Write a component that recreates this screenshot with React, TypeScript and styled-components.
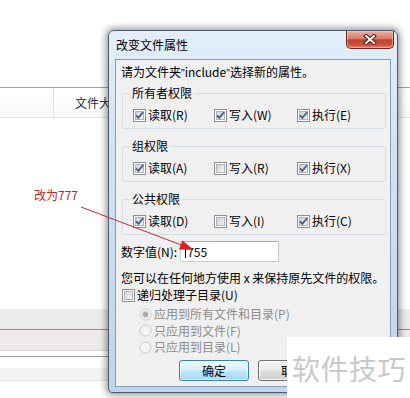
import React from 'react';
import styled, { createGlobalStyle } from 'styled-components';

const GlobalStyle = createGlobalStyle`
  html, body {
    margin: 0;
    padding: 0;
    background: #fff;
  }
`;

const Page = styled.div`
  position: relative;
  width: 410px;
  height: 398px;
  overflow: hidden;
  background: #fff;
  font-family: "Noto Sans CJK SC", "Liberation Sans", sans-serif;
  font-size: 12px;
  line-height: 14px;
  color: #000;
`;

/* explorer list behind the dialog */
const Explorer = styled.div`
  display: flex;
  flex-direction: column;
  padding-top: 87px;
`;

const ListHeader = styled.div`
  display: flex;
  height: 29px;
  border-top: 1px solid #a0a0a0;
  border-bottom: 1px solid #e3e3e3;
  background: linear-gradient(#ffffff, #f9f9f9);
`;

const HeaderCell = styled.div<{ $w?: number }>`
  width: ${(p) => (p.$w ? `${p.$w}px` : 'auto')};
  flex: ${(p) => (p.$w ? 'none' : '1')};
  border-right: ${(p) => (p.$w ? '1px solid #e2e2e2' : 'none')};
  display: flex;
  align-items: center;
  padding-left: ${(p) => (p.$w ? 0 : 21)}px;
  color: #333;
`;

const Band = styled.div<{ $h: number; $bg: string; $line: string }>`
  height: ${(p) => p.$h}px;
  background: ${(p) => p.$bg};
  border-bottom: 1px solid ${(p) => p.$line};
`;

/* dialog window */
const Window = styled.div`
  position: absolute;
  left: 108px;
  top: 30px;
  width: 290px;
  height: 363px;
  box-sizing: border-box;
  border: 1px solid #4c5a6c;
  border-radius: 6px 6px 4px 4px;
  background: linear-gradient(180deg, #e3eefa 0%, #d2e3f5 30%, #bfd5ed 100%);
  box-shadow: 0 0 7px 2px rgba(0, 0, 0, 0.42);
  display: flex;
  flex-direction: column;
  padding: 0 6px 5px 6px;
`;

const TitleBar = styled.div`
  height: 28px;
  margin: 0 -6px;
  padding: 0 3px 0 7px;
  display: flex;
  justify-content: space-between;
  align-items: flex-start;
`;

const TitleText = styled.div`
  padding-top: 7px;
  color: #000;
`;

const CloseButton = styled.div`
  width: 48px;
  height: 18px;
  box-sizing: border-box;
  border: 1px solid #6a2720;
  border-top: none;
  border-radius: 0 0 5px 5px;
  background: linear-gradient(
    180deg,
    #eab1a6 0%,
    #da7a68 45%,
    #c5402e 52%,
    #c9503e 80%,
    #dd7d6b 100%
  );
  box-shadow: inset 0 0 0 1px rgba(255, 210, 200, 0.5);
  display: flex;
  align-items: center;
  justify-content: center;
`;

const Client = styled.div`
  flex: 1;
  background: #f0f0f0;
  border: 1px solid #8a9cb3;
  padding: 5px 4px 0 5px;
  display: flex;
  flex-direction: column;
`;

const Line = styled.div<{ $mt?: number }>`
  margin-top: ${(p) => p.$mt ?? 0}px;
  white-space: nowrap;
`;

const Quote = styled.span`
  font-family: "Liberation Sans", sans-serif;
  font-size: 11px;
`;

const Group = styled.fieldset<{ $mt: number }>`
  margin: ${(p) => p.$mt}px 0 0 1px;
  padding: 7px 9px 5px 10px;
  border: 1px solid #d5dfe5;
  border-radius: 3px;
  min-width: 0;
`;

const Legend = styled.legend`
  padding: 0 2px;
  margin-left: -3px;
  line-height: 14px;
`;

const CheckGrid = styled.div`
  display: grid;
  grid-template-columns: 81px 83px 1fr;
  height: 16px;
  align-items: center;
`;

const Option = styled.label<{ $indent?: number; $disabled?: boolean }>`
  display: flex;
  align-items: center;
  gap: 2px;
  height: 16px;
  padding-left: ${(p) => p.$indent ?? 0}px;
  color: ${(p) => (p.$disabled ? '#8c8c8c' : '#000')};
  white-space: nowrap;
`;

const Recursive = styled(Option)`
  margin: 2px 0 0 1px;
`;

const ValueRow = styled.div`
  margin-top: 6px;
  display: flex;
  align-items: center;
  gap: 3px;
`;

const TextBox = styled.div`
  width: 99px;
  height: 21px;
  box-sizing: border-box;
  border: 1px solid #c8ccd4;
  border-top-color: #abadb3;
  background: #fff;
  display: flex;
  align-items: center;
  padding-left: 4px;
  gap: 1px;
`;

const Caret = styled.span`
  width: 1px;
  height: 13px;
  background: #000;
`;

const RadioList = styled.div`
  margin-top: 3px;
  display: flex;
  flex-direction: column;
  gap: 0.5px;
`;

const ButtonRow = styled.div`
  margin-top: 5px;
  display: flex;
  justify-content: center;
  gap: 9px;
`;

const Button = styled.div<{ $primary?: boolean }>`
  width: 70px;
  height: 21px;
  box-sizing: border-box;
  border-radius: 3px;
  border: 1px solid ${(p) => (p.$primary ? '#3c7fb1' : '#707070')};
  background: ${(p) =>
    p.$primary
      ? 'linear-gradient(180deg, #eaf6fd 0%, #d9f0fc 48%, #bee6fd 52%, #a7d9f5 100%)'
      : 'linear-gradient(180deg, #f2f2f2 0%, #ebebeb 48%, #dddddd 52%, #cfcfcf 100%)'};
  box-shadow: inset 0 0 0 1px ${(p) => (p.$primary ? 'rgba(255,255,255,0.6)' : 'rgba(255,255,255,0.8)')};
  display: flex;
  align-items: center;
  justify-content: center;
`;

/* overlays */
const Annotation = styled.div`
  position: absolute;
  left: 34px;
  top: 188px;
  color: #b8272a;
  font-size: 12px;
  line-height: 14px;
`;

const ArrowLayer = styled.svg`
  position: absolute;
  left: 0;
  top: 0;
  pointer-events: none;
`;

const Watermark = styled.div`
  position: absolute;
  left: 287px;
  top: 337px;
  width: 123px;
  height: 61px;
  background: #fff;
  color: #c9c9c9;
  font-size: 28px;
  line-height: 30px;
  display: flex;
  align-items: center;
  padding-left: 5px;
  box-sizing: border-box;
  letter-spacing: 0.5px;
`;

const CheckBox = ({ checked }: { checked?: boolean }) => (
  <svg width="13" height="13" viewBox="0 0 13 13">
    <defs>
      <linearGradient id="cbfill" x1="0" y1="0" x2="1" y2="1">
        <stop offset="0" stopColor="#cbcfd5" />
        <stop offset="1" stopColor="#f7f7f7" />
      </linearGradient>
    </defs>
    <rect x="0.5" y="0.5" width="12" height="12" fill="#fff" stroke="#8e8f8f" />
    <rect x="2.5" y="2.5" width="8" height="8" fill="url(#cbfill)" stroke="#b0b4ba" />
    {checked && (
      <path d="M3 6.3 L5.4 8.9 L10.2 3" fill="none" stroke="#4b5f8f" strokeWidth="1.9" />
    )}
  </svg>
);

const Radio = ({ checked }: { checked?: boolean }) => (
  <svg width="13" height="13" viewBox="0 0 13 13">
    <circle cx="6.5" cy="6.5" r="5.5" fill="#f4f4f4" stroke="#c9c9c9" />
    {checked && <circle cx="6.5" cy="6.5" r="3" fill="#a9a9a9" stroke="#cfcfcf" />}
  </svg>
);

const CloseGlyph = () => (
  <svg width="14" height="11" viewBox="0 0 14 11">
    <path d="M3 2 L11 9 M11 2 L3 9" stroke="#4e1812" strokeWidth="4" strokeLinecap="square" />
    <path d="M3 2 L11 9 M11 2 L3 9" stroke="#fff" strokeWidth="2" strokeLinecap="square" />
  </svg>
);

const perms = [
  { title: '所有者权限', mt: 6, items: [['读取(R)', true], ['写入(W)', true], ['执行(E)', true]] },
  { title: '组权限', mt: 10, items: [['读取(A)', true], ['写入(R)', false], ['执行(X)', true]] },
  { title: '公共权限', mt: 10, items: [['读取(D)', true], ['写入(I)', false], ['执行(C)', true]] },
] as const;

export default function App() {
  return (
    <Page>
      <GlobalStyle />
      <Explorer>
        <ListHeader>
          <HeaderCell $w={53} />
          <HeaderCell>文件大小</HeaderCell>
        </ListHeader>
        <Band $h={190} $bg="#fff" $line="transparent" />
        <Band $h={20} $bg="#ececec" $line="#8e8e8e" />
        <Band $h={20} $bg="#efebeb" $line="#dadada" />
        <Band $h={5} $bg="#fff" $line="#9a9a9a" />
        <Band $h={10} $bg="#fff" $line="transparent" />
        <Band $h={12} $bg="#f4f4f4" $line="#e2e2e2" />
      </Explorer>

      <Window>
        <TitleBar>
          <TitleText>改变文件属性</TitleText>
          <CloseButton>
            <CloseGlyph />
          </CloseButton>
        </TitleBar>
        <Client>
          <Line>
            请为文件夹<Quote>”</Quote>include<Quote>”</Quote>选择新的属性。
          </Line>
          {perms.map((g) => (
            <Group key={g.title} $mt={g.mt}>
              <Legend>{g.title}</Legend>
              <CheckGrid>
                {g.items.map(([label, on]) => (
                  <Option key={label}>
                    <CheckBox checked={on} />
                    {label}
                  </Option>
                ))}
              </CheckGrid>
            </Group>
          ))}
          <ValueRow>
            数字值(N):
            <TextBox>
              <Caret />
              755
            </TextBox>
          </ValueRow>
          <Line $mt={9}>您可以在任何地方使用 x 来保持原先文件的权限。</Line>
          <Recursive>
            <CheckBox />
            递归处理子目录(U)
          </Recursive>
          <RadioList>
            <Option $indent={18} $disabled>
              <Radio checked />
              应用到所有文件和目录(P)
            </Option>
            <Option $indent={18} $disabled>
              <Radio />
              只应用到文件(F)
            </Option>
            <Option $indent={18} $disabled>
              <Radio />
              只应用到目录(L)
            </Option>
          </RadioList>
          <ButtonRow>
            <Button $primary>确定</Button>
            <Button>取消</Button>
          </ButtonRow>
        </Client>
      </Window>

      <Annotation>改为777</Annotation>
      <ArrowLayer width="410" height="398" viewBox="0 0 410 398">
        <line x1="81" y1="207" x2="184" y2="246" stroke="#b83030" strokeWidth="1" />
        <polygon points="194,250 182.5,240.5 179,249.5" fill="#e02020" />
      </ArrowLayer>

      <Watermark>软件技巧</Watermark>
    </Page>
  );
}
